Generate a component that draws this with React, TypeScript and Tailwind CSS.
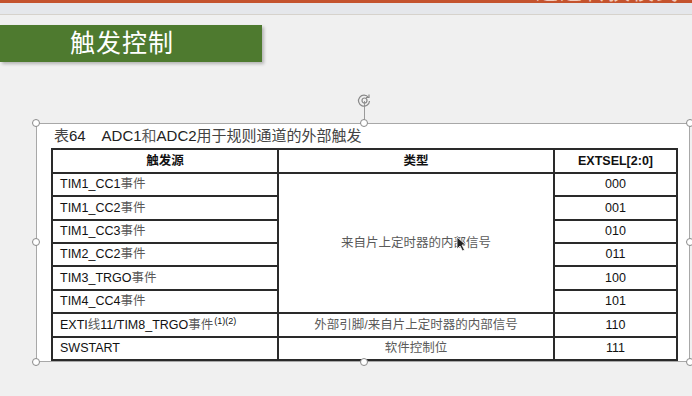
import React from "react";

const sans = "font-['Liberation_Sans','Noto_Sans_CJK_SC',sans-serif]";

type Row = { src: React.ReactNode; code: string; h: string };

const cn = (t: string) => <span className="text-[#5a5a5a]">{t}</span>;

const rows: Row[] = [
  { src: <>TIM1_CC1{cn("事件")}</>, code: "000", h: "h-[23px]" },
  { src: <>TIM1_CC2{cn("事件")}</>, code: "001", h: "h-[24px]" },
  { src: <>TIM1_CC3{cn("事件")}</>, code: "010", h: "h-[23px]" },
  { src: <>TIM2_CC2{cn("事件")}</>, code: "011", h: "h-[23px]" },
  { src: <>TIM3_TRGO{cn("事件")}</>, code: "100", h: "h-[24px]" },
  { src: <>TIM4_CC4{cn("事件")}</>, code: "101", h: "h-[23px]" },
  {
    src: (
      <>
        EXTI{cn("线")}11/TIM8_TRGO{cn("事件")}
        <sup className="text-[9px] ml-px">(1)(2)</sup>
      </>
    ),
    code: "110",
    h: "h-[24px]",
  },
  { src: <>SWSTART</>, code: "111", h: "h-[23px]" },
];

function Handle({ className }: { className: string }) {
  return (
    <span
      className={`absolute w-[8px] h-[8px] rounded-full border border-[#8a8a8a] bg-white ${className}`}
    />
  );
}

export default function App() {
  return (
    <div className={`w-[692px] h-[396px] bg-[#f0f0f0] overflow-hidden ${sans}`}>
      {/* top ribbon, title text of the slide above is cut off */}
      <div className="h-[3px] bg-[#c4532e] overflow-hidden flex justify-end pr-[12px]">
        <span className="text-[22px] leading-[22px] -mt-[19px] text-[#f3cbbd] tracking-[2px]">
          通道转换模式
        </span>
      </div>
      <div className="h-[12px] bg-[#e5e7eb] border-b border-[#d6d2cc]" />

      {/* section banner */}
      <div className="mt-[10px] w-[262px] h-[37px] bg-[#4e7a2f] shadow-[2px_2px_3px_rgba(0,0,0,0.25)] flex items-center pl-[70px]">
        <span className="text-white text-[25px] leading-none tracking-[1px]">触发控制</span>
      </div>

      {/* selected picture frame */}
      <div className="relative ml-[36px] mt-[61px] w-[654px] h-[239px] border border-[#a8a8a8] bg-white">
        <span className="absolute left-[327px] -top-[23px] w-px h-[23px] bg-[#9a9a9a]" />
        <svg
          className="absolute left-[320px] -top-[31px]"
          width="15"
          height="15"
          viewBox="0 0 15 15"
          fill="none"
          stroke="#8a8a8a"
          strokeWidth="1.2"
        >
          <path d="M11.5 4.5A5.5 5.5 0 1 0 12.5 8" />
          <path d="M9 4.5h3V1.5" />
          <circle cx="7.5" cy="7.5" r="2.5" />
        </svg>
        <Handle className="-left-[5px] -top-[5px]" />
        <Handle className="left-[323px] -top-[5px]" />
        <Handle className="-right-[5px] -top-[5px]" />
        <Handle className="-left-[5px] top-[114px]" />
        <Handle className="-right-[5px] top-[114px]" />
        <Handle className="-left-[5px] -bottom-[5px]" />
        <Handle className="left-[323px] -bottom-[5px]" />
        <Handle className="-right-[5px] -bottom-[5px]" />

        <div className="pl-[17px] h-[24px] flex items-center text-[15px] text-[#222] whitespace-pre">
          <span className="text-[#444]">表</span>64{"    "}ADC1{cn("和")}ADC2
          <span className="text-[#444]">用于规则通道的外部触发</span>
        </div>

        <table className="ml-[14px] w-[625px] border-collapse table-fixed text-[12.5px] text-[#111]">
          <colgroup>
            <col className="w-[226px]" />
            <col className="w-[276px]" />
            <col className="w-[123px]" />
          </colgroup>
          <thead>
            <tr className="h-[24px]">
              <th className="border-2 border-[#2a2a2a] font-bold">触发源</th>
              <th className="border-2 border-[#2a2a2a] font-bold">类型</th>
              <th className="border-2 border-[#2a2a2a] font-bold">EXTSEL[2:0]</th>
            </tr>
          </thead>
          <tbody>
            {rows.map((r, i) => (
              <tr key={r.code} className={r.h}>
                <td className="border-2 border-[#2a2a2a] pl-[7px] py-0 whitespace-nowrap">{r.src}</td>
                {i === 0 && (
                  <td rowSpan={6} className="border-2 border-[#2a2a2a] text-center relative">
                    {cn("来自片上定时器的内部信号")}
                    <svg
                      className="absolute left-[177px] top-[62px]"
                      width="12"
                      height="16"
                      viewBox="0 0 12 16"
                    >
                      <path
                        d="M1 1v12l3-3 2.5 5 2-1-2.5-5H10z"
                        fill="#222"
                        stroke="#fff"
                        strokeWidth="0.8"
                      />
                    </svg>
                  </td>
                )}
                {i === 6 && (
                  <td className="border-2 border-[#2a2a2a] text-center">
                    {cn("外部引脚/来自片上定时器的内部信号")}
                  </td>
                )}
                {i === 7 && (
                  <td className="border-2 border-[#2a2a2a] text-center">{cn("软件控制位")}</td>
                )}
                <td className="border-2 border-[#2a2a2a] text-center">{r.code}</td>
              </tr>
            ))}
          </tbody>
        </table>
      </div>
    </div>
  );
}
